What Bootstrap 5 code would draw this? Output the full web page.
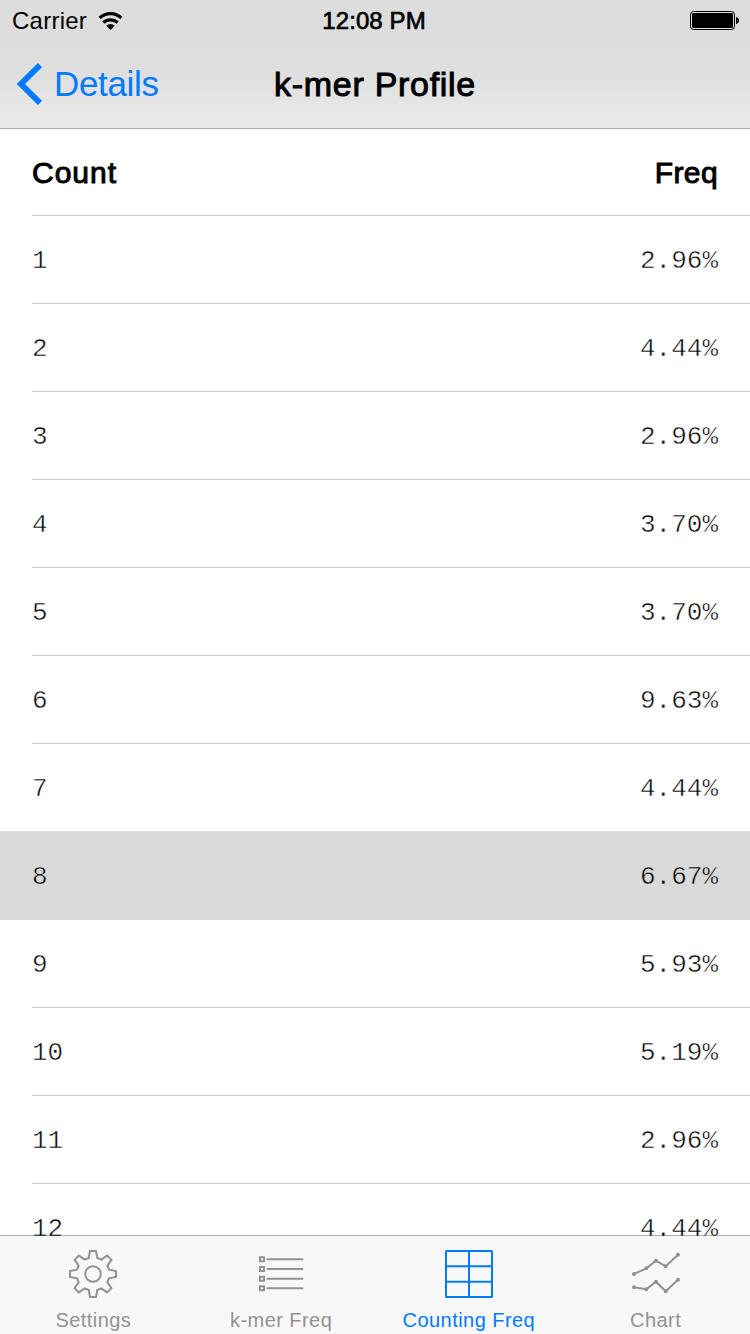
<!DOCTYPE html>
<html lang="en">
<head>
<meta charset="utf-8">
<meta name="viewport" content="width=device-width, initial-scale=1">
<title>k-mer Profile</title>
<link href="https://cdn.jsdelivr.net/npm/bootstrap@5.3.0/dist/css/bootstrap.min.css" rel="stylesheet">
<style>
  body { font-family: "Liberation Sans", Arial, sans-serif; color: #000; background: #fff; line-height: 1; }
  .screen { height: 1334px; }
  .top-area { height: 129px; background: linear-gradient(#dcdcdc 0, #dfdfdf 60%, #ebebeb 100%); border-bottom: 1px solid #b2b2b2; }
  .status-line { height: 40px; font-size: 24px; padding: 1px 11px 0 12px; }
  .carrier { letter-spacing: .25px; }
  .wifi { margin-left: 11px; }
  .medium { font-weight: 400; -webkit-text-stroke: 1px #000; }
  .clock { font-size: 24px; letter-spacing: .1px; -webkit-text-stroke-width: .7px; padding: 1px 3px 0 0; }
  .title-line { height: 88px; padding: 0 16px; }
  .side { flex: 1 1 0; }
  .back-link { color: #007aff; font-size: 35px; letter-spacing: -.35px; gap: 11px; padding-top: 1px; }
  .chev { margin-top: 1px; }
  .page-title { font-size: 34px; letter-spacing: .7px; padding-top: 1px; }
  .freq-list { --bs-list-group-bg: transparent; margin-bottom: -1px; }
  .freq-row { height: 88px; flex: none; font: 26px/1 "Liberation Mono", "Courier New", monospace; -webkit-text-stroke: .5px #fff; }
  .freq-row .cells { margin-left: 32px; padding: 2px 32px 0 0; border-bottom: 1px solid #c8c7cc; }
  .freq-row.head { height: 87px; font: 400 30px/1 "Liberation Sans", Arial, sans-serif; letter-spacing: .4px; -webkit-text-stroke: 1px #000; }
  .freq-row.head span:first-child { letter-spacing: 1px; }
  .freq-row.picked { background: #d9d9d9; height: 89px; margin: -1px 0 0; position: relative; -webkit-text-stroke-color: #d9d9d9; }
  .freq-row.picked .cells { border-color: transparent; padding-top: 3px; }
  .tab-area { height: 99px; background: #f8f8f8; background-clip: padding-box; border-top: 1px solid rgba(0,0,0,.3); z-index: 1; }
  .tab-area .nav-link { color: #929292; font-size: 20px; padding: 14px 1px 0 0; letter-spacing: .45px; }
  .tab-area .nav-link.active { color: #007aff; padding-right: 0; }
  .tab-area svg { width: 48px; height: 48px; margin-bottom: 12px; overflow: visible; fill: none; stroke: currentColor; stroke-width: 2; }
</style>
<script src="https://cdn.jsdelivr.net/npm/bootstrap@5.3.0/dist/js/bootstrap.bundle.min.js"></script>
</head>
<body>
<div class="screen d-flex flex-column overflow-hidden">
  <header class="top-area flex-shrink-0">
    <div class="status-line d-flex align-items-center">
      <div class="side d-flex align-items-center"><span class="carrier">Carrier</span>
        <svg class="wifi" width="26" height="20" viewBox="0 0 26 20" fill="none" stroke="#000" stroke-width="3.200"><path d="M1.600 6.900a16 16 0 0 1 21.800 0M5.400 11.600a10.600 10.600 0 0 1 14.200 0"/><path d="M12.500 19l-4.200-4.200a6 6 0 0 1 8.400 0z" fill="#000" stroke="none"/></svg>
      </div>
      <span class="clock medium">12:08 PM</span>
      <div class="side d-flex justify-content-end">
        <svg class="battery" width="49" height="20" viewBox="0 0 49 20"><rect x=".5" y=".5" width="44" height="18" rx="3" fill="none" stroke="#000"/><rect x="2" y="2" width="41" height="15" rx="1.2"/><path d="M46 6q3 .6 3 3.500t-3 3.500z"/></svg>
      </div>
    </div>
    <div class="title-line d-flex align-items-center">
      <div class="side"><a href="#" class="back-link d-inline-flex align-items-center text-decoration-none"><svg class="chev" width="27" height="42" viewBox="0 0 27 42" fill="none" stroke="currentColor" stroke-width="5.800"><path d="M24 2.100 4.900 21 24 39.900"/></svg><span class="back-text">Details</span></a></div>
      <h1 class="page-title medium m-0">k-mer Profile</h1>
      <div class="side"></div>
    </div>
  </header>

  <main class="flex-fill overflow-hidden freq-list">
    <div class="freq-row head d-flex"><div class="cells flex-fill d-flex justify-content-between align-items-center"><span>Count</span><span>Freq</span></div></div>
    <div id="rows"></div>
  </main>

  <nav class="tab-area nav nav-justified flex-nowrap flex-shrink-0 position-relative">
    <a href="#" class="nav-link d-flex flex-column align-items-center"><svg viewBox="-24 -24 48 48"><path d="M-4.300-16-3-23H3L4.300-16 8.300-14.400 14.100-18.400 18.400-14.100 14.400-8.300 16-4.300 23-3V3L16 4.300 14.400 8.300 18.400 14.100 14.100 18.400 8.300 14.400 4.300 16 3 23H-3L-4.300 16-8.300 14.400-14.100 18.400-18.400 14.100-14.400 8.300-16 4.300-23 3V-3L-16-4.300-14.400-8.300-18.400-14.100-14.100-18.400-8.300-14.400Z"/><circle r="7.800"/></svg><span>Settings</span></a>
    <a href="#" class="nav-link d-flex flex-column align-items-center"><svg viewBox="0 0 48 48"><path d="M3 7.300h4v4H3zM3 17h4v4H3zM3 26.700h4v4H3zM3 36.300h4v4H3z"/><path d="M10.500 9.300h35M10.500 19h35M10.500 28.700h35M10.500 38.300h35" stroke-linecap="round"/></svg><span>k-mer Freq</span></a>
    <a href="#" class="nav-link active d-flex flex-column align-items-center"><svg viewBox="0 0 48 48"><rect x="1" y="1" width="46" height="46" rx=".5"/><path d="M24 1v46M1 16.300h46M1 31.700h46"/></svg><span>Counting Freq</span></a>
    <a href="#" class="nav-link d-flex flex-column align-items-center"><svg viewBox="0 0 48 48"><path d="M2 24 14.300 18.300 24 10.700 33.700 16.300 46 4.700M2 37.300 14.300 39.300 24 31.700 33.700 41.300 46 29.700"/><path d="M2 24h0M14.300 18.300h0M24 10.700h0M33.700 16.300h0M46 4.700h0M2 37.300h0M14.300 39.300h0M24 31.700h0M33.700 41.300h0M46 29.700h0" stroke-width="4" stroke-linecap="round"/></svg><span>Chart</span></a>
  </nav>
</div>
<script>
  const freqs = ['2.96', '4.44', '2.96', '3.70', '3.70', '9.63', '4.44', '6.67', '5.93', '5.19', '2.96', '4.44'];
  document.getElementById('rows').innerHTML = freqs.map((f, i) =>
    `<div class="freq-row d-flex${i === 7 ? ' picked' : ''}"><div class="cells flex-fill d-flex justify-content-between align-items-center"><span>${i + 1}</span><span>${f}%</span></div></div>`).join('');
</script>
</body>
</html>
